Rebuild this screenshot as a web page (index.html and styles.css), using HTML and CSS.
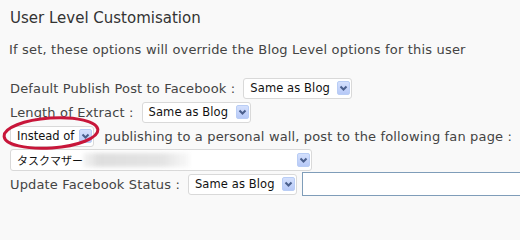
FILE: index.html
```html
<!DOCTYPE html>
<html>
<head>
<meta charset="utf-8">
<link rel="stylesheet" href="styles.css">
</head>
<body>
<div class="page">
  <h3 class="title">User Level Customisation</h3>
  <p class="intro">If set, these options will override the Blog Level options for this user</p>

  <div class="row row-first">
    <span class="label">Default Publish Post to Facebook :</span>
    <span class="select w-blog"><span class="val">Same as Blog</span><span class="btn"><svg viewBox="0 0 13 14" width="13" height="14"><path d="M3.5 5.5 L6.5 8.5 L9.5 5.5" fill="none" stroke="#4a5f8c" stroke-width="2"/></svg></span></span>
  </div>

  <div class="row">
    <span class="label">Length of Extract :</span>
    <span class="select w-blog"><span class="val">Same as Blog</span><span class="btn"><svg viewBox="0 0 13 14" width="13" height="14"><path d="M3.5 5.5 L6.5 8.5 L9.5 5.5" fill="none" stroke="#4a5f8c" stroke-width="2"/></svg></span></span>
  </div>

  <div class="row">
    <span class="select w-instead"><span class="val">Instead of</span><span class="btn"><svg viewBox="0 0 13 14" width="13" height="14"><path d="M3.5 5.5 L6.5 8.5 L9.5 5.5" fill="none" stroke="#4a5f8c" stroke-width="2"/></svg></span></span>
    <span class="label label-after">publishing to a personal wall, post to the following fan page :</span>
  </div>

  <div class="row">
    <span class="select w-fan"><span class="val jp">タスクマザー</span><span class="blurred"></span><span class="btn"><svg viewBox="0 0 13 14" width="13" height="14"><path d="M3.5 5.5 L6.5 8.5 L9.5 5.5" fill="none" stroke="#4a5f8c" stroke-width="2"/></svg></span></span>
  </div>

  <div class="row">
    <span class="label">Update Facebook Status :</span>
    <span class="select w-blog"><span class="val">Same as Blog</span><span class="btn"><svg viewBox="0 0 13 14" width="13" height="14"><path d="M3.5 5.5 L6.5 8.5 L9.5 5.5" fill="none" stroke="#4a5f8c" stroke-width="2"/></svg></span></span>
    <span class="textbox"></span>
  </div>

  <svg class="mark" width="104" height="40" viewBox="0 0 104 40">
    <ellipse cx="51" cy="19" rx="47" ry="15" transform="rotate(-4 51 19)" fill="none" stroke="#c8163a" stroke-width="3"/>
  </svg>
</div>
</body>
</html>
```

FILE: styles.css
```css
html, body {
  margin: 0;
  padding: 0;
  background: #f9f9f9;
}

.page {
  position: relative;
  padding: 8px 0 0 10px;
  font-family: "DejaVu Sans", Verdana, sans-serif;
  color: #444;
  width: 520px;
  height: 200px;
  box-sizing: border-box;
  overflow: hidden;
}

.title {
  margin: 0;
  font-size: 15px;
  line-height: 20px;
  font-weight: normal;
  color: #333;
}

.intro {
  margin: 14px 0 0 -1px;
  font-size: 13px;
  line-height: 16px;
  letter-spacing: 0.18px;
}

.row {
  display: flex;
  align-items: center;
  height: 24px;
  font-size: 13px;
  letter-spacing: 0.15px;
  white-space: nowrap;
}

.row-first {
  margin-top: 18px;
}

.label {
  margin-right: 8px;
}

.label-after {
  margin-left: 10px;
}

.select {
  display: flex;
  align-items: center;
  box-sizing: border-box;
  height: 21px;
  background: #fff;
  border: 1px solid #d9d9d9;
  border-radius: 3px;
  padding: 0 1px 0 6px;
  color: #111;
  font-size: 11.5px;
  letter-spacing: 0.1px;
}

.select .val {
  flex: 1 0 auto;
}

.w-blog { width: 109px; }
.w-instead { width: 86px; letter-spacing: 0; }
.w-fan { width: 302px; height: 22px; }

.jp {
  flex: 0 0 auto !important;
  font-family: "Noto Sans CJK JP", "DejaVu Sans", sans-serif;
  font-size: 11px;
  letter-spacing: 0;
}

.blurred {
  flex: 1;
  align-self: stretch;
  margin: 3px 104px 3px 0;
  background: linear-gradient(90deg, rgba(220,220,220,0.3), #dedede 15%, #e4e4e4 75%, rgba(230,230,230,0.2));
  filter: blur(2px);
}

.btn {
  display: block;
  flex: 0 0 auto;
  box-sizing: border-box;
  width: 13px;
  height: 14px;
  margin-left: 3px;
  border: 1px solid #b9cdf5;
  border-radius: 2px;
  background: linear-gradient(#d4e0fd, #b7c9f7);
}

.btn svg {
  display: block;
  margin: -1px;
}

.textbox {
  margin-left: 5px;
  flex: 1;
  height: 24px;
  box-sizing: border-box;
  background: #fff;
  border: 1px solid #7f9db9;
  border-right: none;
}

.mark {
  position: absolute;
  left: 0;
  top: 114px;
}
```
